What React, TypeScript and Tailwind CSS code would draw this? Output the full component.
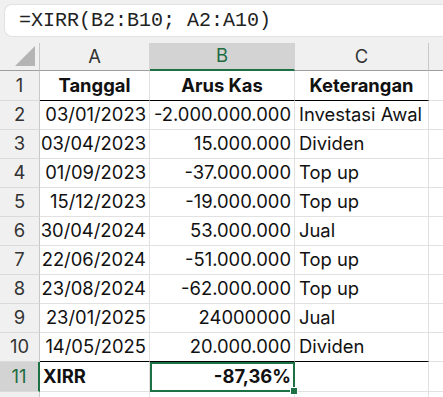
import React from "react";

const rows: [string, string, string][] = [
  ["03/01/2023", "-2.000.000.000", "Investasi Awal"],
  ["03/04/2023", "15.000.000", "Dividen"],
  ["01/09/2023", "-37.000.000", "Top up"],
  ["15/12/2023", "-19.000.000", "Top up"],
  ["30/04/2024", "53.000.000", "Jual"],
  ["22/06/2024", "-51.000.000", "Top up"],
  ["23/08/2024", "-62.000.000", "Top up"],
  ["23/01/2025", "24000000", "Jual"],
  ["14/05/2025", "20.000.000", "Dividen"],
];

const font = { fontFamily: "Inter, 'Noto Sans', sans-serif" };

export default function App() {
  return (
    <div className="w-[443px] h-[397px] overflow-hidden bg-white text-[18.4px] text-[#111]" style={font}>
      {/* formula bar area */}
      <div className="bg-[#f0f0f0] h-[43px] pt-[4px] pl-[4px]">
        <div className="h-[33px] bg-white rounded-l-[8px] border border-[#e2e2e2] border-r-0 flex items-center pl-[14px] text-[20px] text-[#222] font-['Liberation_Mono',monospace]">
          =XIRR(B2:B10; A2:A10)
        </div>
      </div>
      {/* column headers */}
      <div className="flex h-[28px] bg-[#f0f0f0] text-[#333]">
        <div className="w-[40px] shrink-0 border-r border-[#c8c8c8] border-b border-b-[#9e9e9e] relative">
          <div className="absolute right-[4px] bottom-[4px] w-0 h-0 border-l-[20px] border-l-transparent border-b-[20px] border-b-[#b4b4b4]"></div>
        </div>
        <div className="w-[110px] shrink-0 border-r border-[#d4d4d4] border-b border-b-[#9e9e9e] flex items-center justify-center">A</div>
        <div className="w-[145px] shrink-0 bg-[#d3d3d3] border-r border-[#d4d4d4] border-b-2 border-b-[#1e7145] flex items-center justify-center text-[#1e6b41]">B</div>
        <div className="w-[134px] shrink-0 border-r border-[#c8c8c8] border-b border-b-[#9e9e9e] flex items-center justify-center">C</div>
        <div className="flex-1 border-b border-b-[#9e9e9e]"></div>
      </div>
      {/* row 1 */}
      <div className="flex h-[30px]">
        <div className="w-[40px] shrink-0 bg-[#f0f0f0] border-r border-[#c8c8c8] border-b border-b-[#dadada] flex items-center justify-center text-[#333]">1</div>
        <div className="w-[110px] shrink-0 border-r border-[#e1e1e1] border-b border-b-black flex items-center justify-center font-bold">Tanggal</div>
        <div className="w-[145px] shrink-0 border-r border-[#e1e1e1] border-b border-b-black flex items-center justify-center font-bold">Arus Kas</div>
        <div className="w-[134px] shrink-0 border-r border-[#e1e1e1] border-b border-b-black flex items-center justify-center font-bold">Keterangan</div>
        <div className="flex-1 border-b border-[#e1e1e1]"></div>
      </div>
      {rows.map((r, i) => {
        const last = i === rows.length - 1;
        const bb = last ? "border-b-black" : "border-b-[#e1e1e1]";
        return (
          <div key={i} className="flex h-[29px]">
            <div className="w-[40px] shrink-0 bg-[#f0f0f0] border-r border-[#c8c8c8] border-b border-b-[#dadada] flex items-center justify-center text-[#333]">{i + 2}</div>
            <div className={`w-[110px] shrink-0 border-r border-[#e1e1e1] border-b ${bb} flex items-center justify-end pr-[3px] whitespace-nowrap`}>{r[0]}</div>
            <div className={`w-[145px] shrink-0 border-r border-[#e1e1e1] border-b ${bb} flex items-center justify-end pr-[3px] whitespace-nowrap`}>{r[1]}</div>
            <div className={`w-[134px] shrink-0 border-r border-[#e1e1e1] border-b ${bb} flex items-center pl-[4px] whitespace-nowrap`}>{r[2]}</div>
            <div className="flex-1 border-b border-[#e1e1e1]"></div>
          </div>
        );
      })}
      {/* row 11 */}
      <div className="flex h-[30px]">
        <div className="w-[40px] shrink-0 bg-[#d3d3d3] border-r-2 border-r-[#1e7145] border-b border-b-[#dadada] flex items-center justify-center text-[#1e6b41]">11</div>
        <div className="w-[110px] shrink-0 border-r border-[#e1e1e1] border-b border-b-[#e1e1e1] flex items-center pl-[3px] font-bold">XIRR</div>
        <div className="w-[145px] shrink-0 relative border-2 border-[#1e7145] flex items-center justify-end pr-[2px] font-bold">
          -87,36%
          <div className="absolute z-10 right-[-5px] bottom-[-5px] w-[8px] h-[8px] bg-[#1e7145] border border-white"></div>
        </div>
        <div className="w-[134px] shrink-0 border-r border-[#e1e1e1] border-b border-b-[#e1e1e1]"></div>
        <div className="flex-1 border-b border-[#e1e1e1]"></div>
      </div>
      <div className="flex h-[20px]">
        <div className="w-[40px] shrink-0 bg-[#f0f0f0] border-r border-[#c8c8c8]"></div>
        <div className="w-[110px] shrink-0 border-r border-[#e1e1e1]"></div>
        <div className="w-[145px] shrink-0 border-r border-[#e1e1e1]"></div>
        <div className="w-[134px] shrink-0 border-r border-[#e1e1e1]"></div>
      </div>
    </div>
  );
}
